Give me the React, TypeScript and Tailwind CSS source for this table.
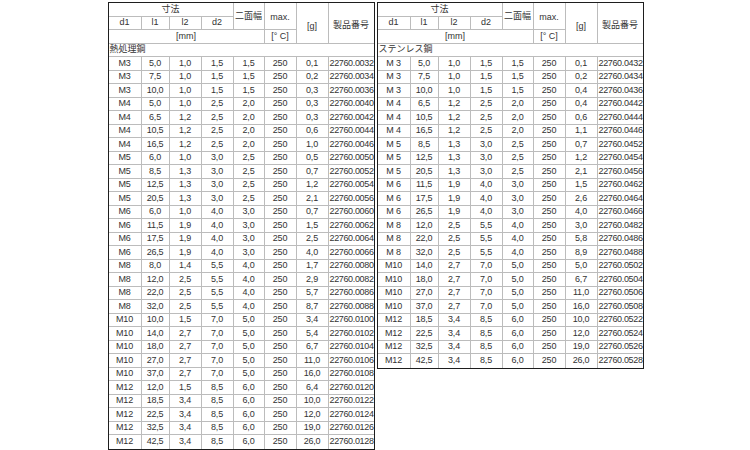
import React from "react";

type Row = [string, string, string, string, string, string, string, string];

const left: Row[] = [
  ["M3", "5,0", "1,0", "1,5", "1,5", "250", "0,1", "22760.0032"],
  ["M3", "7,5", "1,0", "1,5", "1,5", "250", "0,2", "22760.0034"],
  ["M3", "10,0", "1,0", "1,5", "1,5", "250", "0,3", "22760.0036"],
  ["M4", "5,0", "1,0", "2,5", "2,0", "250", "0,3", "22760.0040"],
  ["M4", "6,5", "1,2", "2,5", "2,0", "250", "0,3", "22760.0042"],
  ["M4", "10,5", "1,2", "2,5", "2,0", "250", "0,6", "22760.0044"],
  ["M4", "16,5", "1,2", "2,5", "2,0", "250", "1,0", "22760.0046"],
  ["M5", "6,0", "1,0", "3,0", "2,5", "250", "0,5", "22760.0050"],
  ["M5", "8,5", "1,3", "3,0", "2,5", "250", "0,7", "22760.0052"],
  ["M5", "12,5", "1,3", "3,0", "2,5", "250", "1,2", "22760.0054"],
  ["M5", "20,5", "1,3", "3,0", "2,5", "250", "2,1", "22760.0056"],
  ["M6", "6,0", "1,0", "4,0", "3,0", "250", "0,7", "22760.0060"],
  ["M6", "11,5", "1,9", "4,0", "3,0", "250", "1,5", "22760.0062"],
  ["M6", "17,5", "1,9", "4,0", "3,0", "250", "2,5", "22760.0064"],
  ["M6", "26,5", "1,9", "4,0", "3,0", "250", "4,0", "22760.0066"],
  ["M8", "8,0", "1,4", "5,5", "4,0", "250", "1,7", "22760.0080"],
  ["M8", "12,0", "2,5", "5,5", "4,0", "250", "2,9", "22760.0082"],
  ["M8", "22,0", "2,5", "5,5", "4,0", "250", "5,7", "22760.0086"],
  ["M8", "32,0", "2,5", "5,5", "4,0", "250", "8,7", "22760.0088"],
  ["M10", "10,0", "1,5", "7,0", "5,0", "250", "3,4", "22760.0100"],
  ["M10", "14,0", "2,7", "7,0", "5,0", "250", "5,4", "22760.0102"],
  ["M10", "18,0", "2,7", "7,0", "5,0", "250", "6,7", "22760.0104"],
  ["M10", "27,0", "2,7", "7,0", "5,0", "250", "11,0", "22760.0106"],
  ["M10", "37,0", "2,7", "7,0", "5,0", "250", "16,0", "22760.0108"],
  ["M12", "12,0", "1,5", "8,5", "6,0", "250", "6,4", "22760.0120"],
  ["M12", "18,5", "3,4", "8,5", "6,0", "250", "10,0", "22760.0122"],
  ["M12", "22,5", "3,4", "8,5", "6,0", "250", "12,0", "22760.0124"],
  ["M12", "32,5", "3,4", "8,5", "6,0", "250", "19,0", "22760.0126"],
  ["M12", "42,5", "3,4", "8,5", "6,0", "250", "26,0", "22760.0128"],
];

const right: Row[] = [
  ["M 3", "5,0", "1,0", "1,5", "1,5", "250", "0,1", "22760.0432"],
  ["M 3", "7,5", "1,0", "1,5", "1,5", "250", "0,2", "22760.0434"],
  ["M 3", "10,0", "1,0", "1,5", "1,5", "250", "0,4", "22760.0436"],
  ["M 4", "6,5", "1,2", "2,5", "2,0", "250", "0,4", "22760.0442"],
  ["M 4", "10,5", "1,2", "2,5", "2,0", "250", "0,6", "22760.0444"],
  ["M 4", "16,5", "1,2", "2,5", "2,0", "250", "1,1", "22760.0446"],
  ["M 5", "8,5", "1,3", "3,0", "2,5", "250", "0,7", "22760.0452"],
  ["M 5", "12,5", "1,3", "3,0", "2,5", "250", "1,2", "22760.0454"],
  ["M 5", "20,5", "1,3", "3,0", "2,5", "250", "2,1", "22760.0456"],
  ["M 6", "11,5", "1,9", "4,0", "3,0", "250", "1,5", "22760.0462"],
  ["M 6", "17,5", "1,9", "4,0", "3,0", "250", "2,6", "22760.0464"],
  ["M 6", "26,5", "1,9", "4,0", "3,0", "250", "4,0", "22760.0466"],
  ["M 8", "12,0", "2,5", "5,5", "4,0", "250", "3,0", "22760.0482"],
  ["M 8", "22,0", "2,5", "5,5", "4,0", "250", "5,8", "22760.0486"],
  ["M 8", "32,0", "2,5", "5,5", "4,0", "250", "8,9", "22760.0488"],
  ["M10", "14,0", "2,7", "7,0", "5,0", "250", "5,0", "22760.0502"],
  ["M10", "18,0", "2,7", "7,0", "5,0", "250", "6,7", "22760.0504"],
  ["M10", "27,0", "2,7", "7,0", "5,0", "250", "11,0", "22760.0506"],
  ["M10", "37,0", "2,7", "7,0", "5,0", "250", "16,0", "22760.0508"],
  ["M12", "18,5", "3,4", "8,5", "6,0", "250", "10,0", "22760.0522"],
  ["M12", "22,5", "3,4", "8,5", "6,0", "250", "12,0", "22760.0524"],
  ["M12", "32,5", "3,4", "8,5", "6,0", "250", "19,0", "22760.0526"],
  ["M12", "42,5", "3,4", "8,5", "6,0", "250", "26,0", "22760.0528"],
];

function Table({ title, rows }: { title: string; rows: Row[] }) {
  const line = "border-[#bcbcbc]";
  return (
    <div className="grid grid-cols-[33px_28px_32px_32px_31px_32px_32px_45px] auto-rows-[13.5px] border border-[#1e1e1e] bg-white text-[9px] leading-none text-[#333333]">
      {/* header row 1 */}
      <div className={`col-start-1 col-span-4 row-start-1 flex items-center justify-center border-r border-b ${line}`}>寸法</div>
      <div className={`col-start-5 row-start-1 row-span-2 flex items-start justify-center pt-[9px] border-r border-b ${line}`}>二面幅</div>
      <div className={`col-start-6 row-start-1 row-span-2 flex items-start justify-center pt-[10px] border-r border-b ${line}`}>max.</div>
      <div className={`col-start-7 row-start-1 row-span-3 flex items-start justify-center pt-[19px] border-r border-b ${line}`}>[g]</div>
      <div className={`col-start-8 row-start-1 row-span-3 flex items-start justify-center pt-[18px] border-b ${line}`}>製品番号</div>
      {/* header row 2 */}
      {["d1", "l1", "l2", "d2"].map((t, i) => (
        <div key={t} className={`row-start-2 flex items-center justify-center border-r border-b ${line}`} style={{ gridColumnStart: i + 1 }}>
          {t}
        </div>
      ))}
      {/* header row 3 */}
      <div className={`col-start-1 col-span-5 row-start-3 flex items-center justify-center border-r border-b ${line}`}>[mm]</div>
      <div className={`col-start-6 row-start-3 flex items-center justify-center border-r border-b ${line}`}>[° C]</div>
      {/* section title */}
      <div className={`col-start-1 col-span-8 row-start-4 flex items-center pl-[1px] border-b ${line}`}>{title}</div>
      {rows.map((r, ri) => {
        const last = ri === rows.length - 1;
        return r.map((c, ci) => {
          const lastCol = ci === 7;
          return (
            <div
              key={`${ri}-${ci}`}
              className={`flex items-center ${lastCol ? "justify-start pl-[1px] tracking-[-0.35px]" : "justify-center border-r tracking-[-0.2px]"} ${last ? "" : "border-b"} ${line}`}
            >
              {c}
            </div>
          );
        });
      })}
    </div>
  );
}

export default function App() {
  return (
    <div className="w-[750px] h-[450px] bg-white overflow-hidden font-['Liberation_Sans','Noto_Sans_CJK_JP',sans-serif]">
      <div className="flex justify-center items-start gap-[2px] pt-[2px] pl-[1px]">
        <div className="w-[267px]">
          <Table title="熱処理鋼" rows={left} />
        </div>
        <div className="w-[267px]">
          <Table title="ステンレス鋼" rows={right} />
        </div>
      </div>
    </div>
  );
}
